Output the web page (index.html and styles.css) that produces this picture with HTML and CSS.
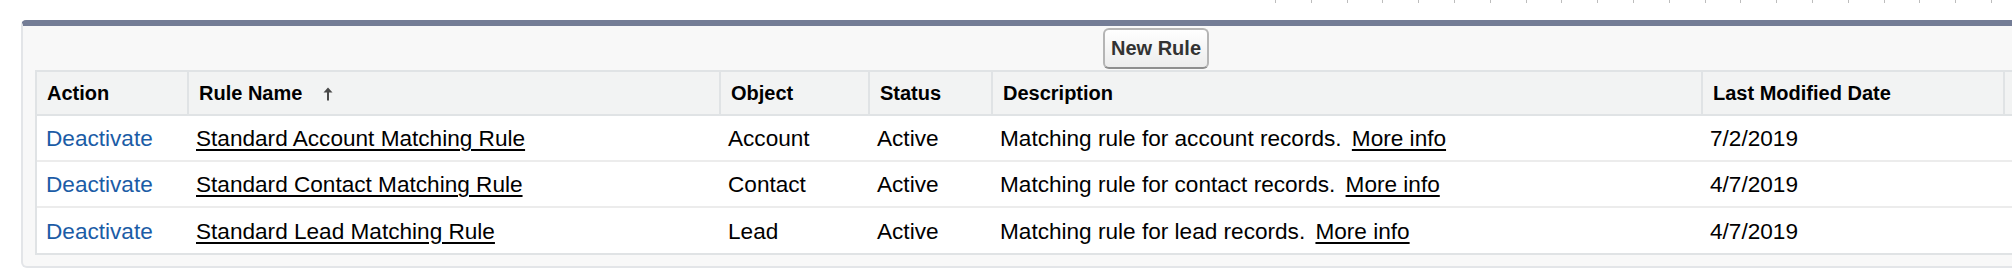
FILE: index.html
```html
<!DOCTYPE html>
<html lang="en">
<head>
<meta charset="utf-8">
<title>Matching Rules</title>
<link rel="stylesheet" href="styles.css">
</head>
<body>
<div class="filter-edge">
  <span class="tick"></span><span class="tick"></span><span class="tick"></span><span class="tick"></span><span class="tick"></span><span class="tick"></span><span class="tick"></span><span class="tick"></span><span class="tick"></span><span class="tick"></span><span class="tick"></span><span class="tick"></span><span class="tick"></span><span class="tick"></span><span class="tick"></span><span class="tick"></span><span class="tick"></span><span class="tick"></span><span class="tick"></span><span class="tick"></span><span class="tick"></span>
</div>
<div class="panel">
  <div class="buttons">
    <button class="btn" type="button">New Rule</button>
  </div>
  <table class="list">
    <colgroup>
      <col class="c-action">
      <col class="c-name">
      <col class="c-object">
      <col class="c-status">
      <col class="c-desc">
      <col class="c-date">
      <col class="c-extra">
    </colgroup>
    <thead>
      <tr>
        <th>Action</th>
        <th>Rule Name <svg class="sort" width="10" height="14" viewBox="0 0 10 14"><path d="M5 0.5 L9.5 5.5 L6 5.5 L6 13.5 L4 13.5 L4 5.5 L0.5 5.5 Z" fill="#4a4a4a"/></svg></th>
        <th>Object</th>
        <th>Status</th>
        <th>Description</th>
        <th>Last Modified Date</th>
        <th></th>
      </tr>
    </thead>
    <tbody>
      <tr>
        <td><a class="action" href="#">Deactivate</a></td>
        <td><a class="plain" href="#">Standard Account Matching Rule</a></td>
        <td>Account</td>
        <td>Active</td>
        <td>Matching rule for account records. <a class="plain more" href="#">More info</a></td>
        <td>7/2/2019</td>
        <td></td>
      </tr>
      <tr>
        <td><a class="action" href="#">Deactivate</a></td>
        <td><a class="plain" href="#">Standard Contact Matching Rule</a></td>
        <td>Contact</td>
        <td>Active</td>
        <td>Matching rule for contact records. <a class="plain more" href="#">More info</a></td>
        <td>4/7/2019</td>
        <td></td>
      </tr>
      <tr>
        <td><a class="action" href="#">Deactivate</a></td>
        <td><a class="plain" href="#">Standard Lead Matching Rule</a></td>
        <td>Lead</td>
        <td>Active</td>
        <td>Matching rule for lead records. <a class="plain more" href="#">More info</a></td>
        <td>4/7/2019</td>
        <td></td>
      </tr>
    </tbody>
  </table>
</div>
</body>
</html>
```
FILE: styles.css
```css
html, body {
  margin: 0;
  padding: 0;
  overflow: hidden;
  background: #ffffff;
}

body {
  width: 2012px;
  height: 268px;
  font-family: "Liberation Sans", Arial, Helvetica, sans-serif;
  color: #000;
}

.filter-edge {
  height: 20px;
  display: flex;
  gap: 34.8px;
  padding-left: 1275px;
  align-items: flex-start;
}

.tick {
  flex: none;
  width: 1px;
  height: 3px;
  background: #bdbdbd;
}

.panel {
  margin-left: 21px;
  width: 2242px;
  background: #f8f8f8;
  border: 2px solid #e3e5e8;
  border-top: 6px solid #747d96;
  border-radius: 5px 5px 6px 6px;
  padding: 0 12px 11px 12px;
}

.buttons {
  height: 44px;
  display: flex;
  justify-content: center;
  align-items: flex-start;
  padding-top: 2px;
  box-sizing: border-box;
}

.btn {
  height: 41px;
  padding: 0 6px;
  font-family: "Liberation Sans", Arial, Helvetica, sans-serif;
  font-size: 20px;
  font-weight: bold;
  color: #333;
  background: linear-gradient(#ffffff, #ececec);
  border: 2px solid #b5b5b5;
  border-bottom-color: #8e8e8e;
  border-radius: 6px;
}

.list {
  width: 2244px;
  table-layout: fixed;
  border-collapse: separate;
  border-spacing: 0;
  border: 2px solid #e0e3e5;
  background: #fff;
}

.c-action { width: 150px; }
.c-name { width: 532px; }
.c-object { width: 149px; }
.c-status { width: 123px; }
.c-desc { width: 710px; }
.c-date { width: 302px; }
.c-extra { width: 274px; }

.list th {
  height: 44px;
  padding: 1px 0 0 10px;
  box-sizing: border-box;
  background: #f2f3f3;
  border-bottom: 2px solid #e0e3e5;
  border-left: 2px solid #e0e3e5;
  text-align: left;
  font-size: 20px;
  font-weight: bold;
  white-space: nowrap;
  vertical-align: middle;
}

.list th:first-child {
  border-left: none;
}

.sort {
  margin-left: 15px;
  vertical-align: -1px;
}

.list td {
  height: 46px;
  padding: 2px 0 0 9px;
  box-sizing: border-box;
  border-bottom: 2px solid #ececec;
  font-size: 22.6px;
  white-space: nowrap;
  vertical-align: middle;
}

.list tbody tr:last-child td {
  height: 45px;
  border-bottom: none;
}

.action {
  color: #1b5ca6;
  text-decoration: none;
}

.plain {
  color: #000;
  text-decoration: underline;
  text-decoration-thickness: 2px;
  text-underline-offset: 3px;
}

.more {
  margin-left: 4px;
}
```
